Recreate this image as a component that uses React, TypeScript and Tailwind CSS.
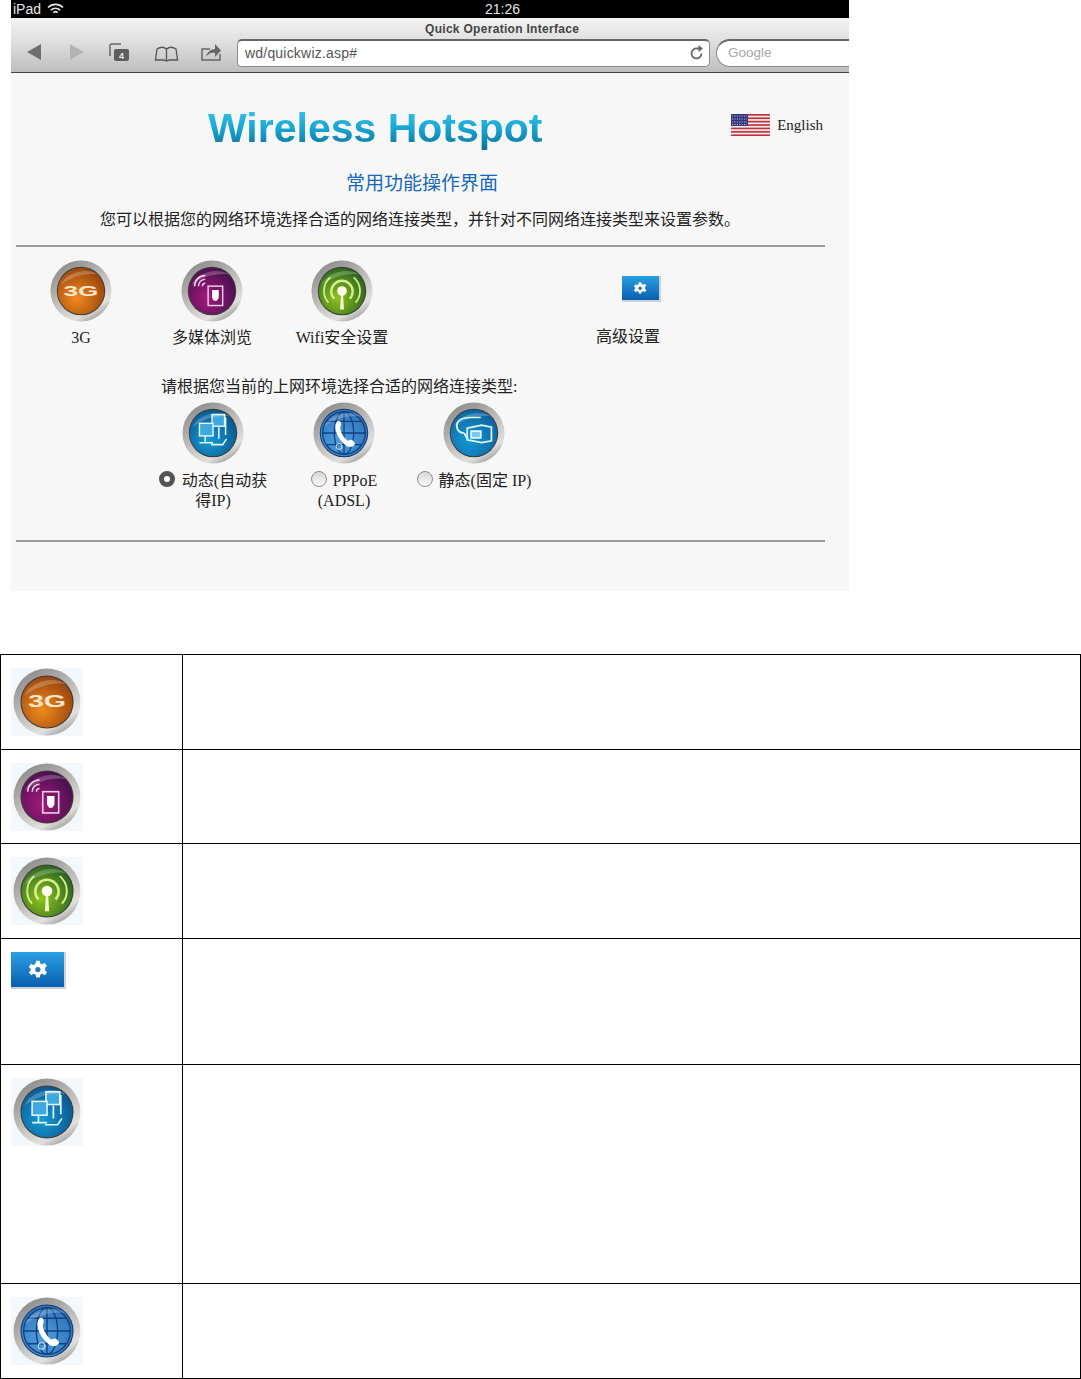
import React from "react";

const SERIF = "font-['Liberation_Serif','Noto_Sans_CJK_SC',serif]";

function Orb({ id, size = 62, inner, rim, children }: { id: string; size?: number; inner: [string, string]; rim?: string; children?: React.ReactNode }) {
  return (
    <svg width={size} height={size} viewBox="0 0 64 64" className="shrink-0">
      <defs>
        <linearGradient id={`ring-${id}`} x1="0.2" y1="0" x2="0.8" y2="1">
          <stop offset="0" stopColor="#8a8a8a" />
          <stop offset="0.45" stopColor="#bdbab6" />
          <stop offset="0.8" stopColor="#e2e0dd" />
          <stop offset="1" stopColor="#8d8d8d" />
        </linearGradient>
        <radialGradient id={`in-${id}`} cx="0.4" cy="0.65" r="0.75">
          <stop offset="0" stopColor={inner[0]} />
          <stop offset="1" stopColor={inner[1]} />
        </radialGradient>
      </defs>
      <circle cx="32" cy="32" r="31.5" fill={`url(#ring-${id})`} />
      <circle cx="32" cy="32" r="25" fill={rim ?? "#3c3c3c"} />
      <circle cx="32" cy="32" r="24" fill={`url(#in-${id})`} />
      {children}
      <path d="M11 26 C16 13 38 7 50 15 C38 13 22 17 11 26Z" fill="#fff" opacity="0.22" />
    </svg>
  );
}

const Orb3G = ({ size }: { size?: number }) => (
  <Orb id={`g3${size}`} size={size} inner={["#f08a1d", "#8f3c0c"]}>
    <text x="32" y="37" textAnchor="middle" fontFamily="Liberation Sans" fontWeight="700" fontSize="15" fill="#f9e6c9" textLength="36" lengthAdjust="spacingAndGlyphs">3G</text>
  </Orb>
);

const OrbMedia = ({ size }: { size?: number }) => (
  <Orb id={`md${size}`} size={size} inner={["#a3197c", "#3f0f4a"]}>
    <g fill="none" stroke="#f0cfe6" strokeWidth="1.5">
      <rect x="28" y="27" width="15" height="20" />
      <path d="M14 27 A11 11 0 0 1 25 16" />
      <path d="M18 27 A7 7 0 0 1 25 20" />
      <path d="M22 27 A3 3 0 0 1 25 24" />
    </g>
    <path d="M32 31h7v8l-2 3h-3l-2-3z" fill="#fff" />
  </Orb>
);

const OrbWifi = ({ size }: { size?: number }) => (
  <Orb id={`wf${size}`} size={size} inner={["#8fc21f", "#1d5a1f"]}>
    <g fill="none" stroke="#d8ec8e" strokeWidth="2.4">
      <path d="M24 40 A11 11 0 1 1 40 40" />
      <path d="M18 44 A18 18 0 0 1 20 18" strokeWidth="1.8" />
      <path d="M46 44 A18 18 0 0 0 44 18" strokeWidth="1.8" />
    </g>
    <path d="M31 34h2l1 17h-4z" fill="#f2f8c6" />
    <circle cx="32" cy="32" r="5" fill="#fdfde8" />
  </Orb>
);

const OrbLan = ({ size }: { size?: number }) => (
  <Orb id={`ln${size}`} size={size} inner={["#149ad4", "#0a4f86"]}>
    <g stroke="#e3f5fd" strokeWidth="1.5" fill="#3fa9df">
      <rect x="31" y="13" width="13" height="12" />
      <rect x="18" y="22" width="14" height="13" />
    </g>
    <path d="M45 16v18M24 35v7h-6M24 42h8M38 26v12M30 44h12l4-6" fill="none" stroke="#e3f5fd" strokeWidth="1.6" />
  </Orb>
);

const OrbGlobe = ({ size }: { size?: number }) => (
  <Orb id={`gb${size}`} size={size} inner={["#4f9fdc", "#2a70b5"]} rim="#123a73">
    <g fill="none" stroke="#123f80" strokeWidth="1.3">
      <circle cx="32" cy="32" r="22" />
      <ellipse cx="32" cy="32" rx="10" ry="22" />
      <path d="M32 10v44M10 32h44M14 20h36M14 44h36" />
    </g>
    <path d="M25 20c2-1 4 0 4 3l-1 4c1 6 4 10 8 13l3-1c2 0 5 3 4 5-2 3-7 3-10 0-6-5-10-12-10-19 0-2 1-4 2-5z" fill="#fff" />
    <circle cx="27" cy="46" r="3" fill="none" stroke="#dbeaf7" strokeWidth="1" />
  </Orb>
);

const OrbCable = ({ size }: { size?: number }) => (
  <Orb id={`cb${size}`} size={size} inner={["#149ad4", "#0a5d99"]}>
    <g fill="none" stroke="#dff3fc" strokeWidth="1.8">
      <path d="M22 32c-7 0-9-6-7-11 2-4 7-5 15-5h9" />
      <path d="M22 32c1 3 2 5 4 6" />
      <path d="M25 27l15-3 10 2v14l-10 2-15-3z" />
      <path d="M29 30h10v7H29z" fill="#7cc7ea" />
    </g>
  </Orb>
);

const GearButton = ({ className }: { className: string }) => (
  <div className={`flex items-center justify-center bg-gradient-to-b from-[#2ba0e4] to-[#0b5fb0] border-r-2 border-b-2 border-[#c9d3d8] ${className}`}>
    <svg viewBox="0 0 24 24" className="h-[60%] w-[60%]" fill="#fff">
      <path d="M10 2h4l.6 3 2.6 1.1 2.6-1.6 2.6 3.5-2.2 2 .1 1 .1 1-.1 1 2.2 2-2.6 3.5-2.6-1.6-2.6 1.1-.6 3h-4l-.6-3-2.6-1.1-2.6 1.6L1.6 15l2.2-2-.1-1 .1-1-2.2-2 2.6-3.5 2.6 1.6L9.400 5z" />
      <circle cx="12" cy="12" r="3" fill="#2b76b8" />
    </svg>
  </div>
);

function Radio({ checked }: { checked?: boolean }) {
  return checked ? (
    <span className="mr-[7px] inline-block h-4 w-4 rounded-full border-[5px] border-[#555] bg-white align-[-1px]" />
  ) : (
    <span className="mr-[6px] inline-block h-4 w-4 rounded-full border border-[#8d8d8d] bg-gradient-to-b from-[#d6d6d6] to-[#fbfbfb] align-[-1px]" />
  );
}

function Flag() {
  return (
    <svg width="39" height="22" viewBox="0 0 39 22" className="shrink-0">
      <rect width="39" height="22" fill="#f3eeee" />
      {[0, 3.4, 6.8, 10.200, 13.600, 17, 20.400].map((y) => (
        <rect key={y} y={y} width="39" height="1.700" fill="#c2333d" />
      ))}
      <rect width="17" height="12" fill="#33367a" />
      <path d="M1 2h15M1 5h15M1 8h15M1 10.500h15" stroke="#c6c8e6" strokeWidth="0.9" strokeDasharray="1.200 1.200" />
    </svg>
  );
}

function Toolbar() {
  return (
    <div className="flex h-[55px] flex-col border-b border-[#444] bg-gradient-to-b from-[#f3f3f3] via-[#dcdcdc] to-[#bdbdbd]">
      <div className="flex h-[21px] items-center pl-[414px] font-['Liberation_Sans',sans-serif] text-[12px] font-bold tracking-[0.3px] text-[#444]">
        Quick Operation Interface
      </div>
      <div className="flex items-start">
        <svg width="226" height="28" viewBox="0 0 226 28" className="shrink-0" fill="none">
          <path d="M16 13l14-8v16z" fill="#6e6e6e" />
          <path d="M59 5l14 8-14 8z" fill="#b4b4b4" />
          <path d="M99 17V7c0-1 1-2 2-2h9" stroke="#666" strokeWidth="1.500" />
          <rect x="103" y="10" width="15" height="12" rx="2" fill="#5e5e5e" />
          <text x="110.500" y="20" textAnchor="middle" fontSize="9" fontWeight="700" fontFamily="Liberation Sans" fill="#eee">4</text>
          <path d="M146 10c3-2 7-2 9.500 0 2.500-2 6.500-2 9.500 0l1.500 11h-8.500c-1 1-4 1-5 0h-8.500zM155.500 10v11" stroke="#555" strokeWidth="1.300" />
          <path d="M199 10h-8v11h18v-6" stroke="#666" strokeWidth="1.500" />
          <path d="M195 18c1-5 5-8 9-8V5l6 6.500-6 6.500v-4c-4-1-7 1-9 4z" fill="#666" />
        </svg>
        <div className="flex h-[28px] w-[473px] items-center justify-between rounded-[5px] border border-[#8a8a8a] border-t-2 border-t-[#666] bg-white pb-[2px] pl-[7px] pr-[5px] font-['Liberation_Sans',sans-serif] text-[14px] tracking-[0.2px] text-[#555]">
          <span>wd/quickwiz.asp#</span>
          <svg width="14" height="15" viewBox="0 0 14 15" fill="none">
            <path d="M11.500 8.500A5 5 0 1 1 7 3.500h3" stroke="#6a6a6a" strokeWidth="1.800" />
            <path d="M8.500 0l4.500 3.500L8.500 7z" fill="#6a6a6a" />
          </svg>
        </div>
        <div className="ml-[6px] flex h-[28px] flex-1 items-center rounded-l-[14px] border border-r-0 border-[#8a8a8a] border-t-2 border-t-[#666] bg-white pb-[2px] pl-[11px] font-['Liberation_Sans',sans-serif] text-[13.500px] text-[#a8a8a8]">
          Google
        </div>
      </div>
    </div>
  );
}

function Browser() {
  return (
    <div className={`ml-[11px] w-[838px] bg-[#f7f7f7] text-[16px] leading-[20px] text-[#222] ${SERIF}`}>
      <div className="relative flex h-[18px] items-center bg-black pl-[2px] font-['Liberation_Sans',sans-serif] text-[14px] text-[#e6e6e6]">
        <span>iPad</span>
        <svg width="17" height="12" viewBox="0 0 17 12" className="ml-[6px]" fill="none" stroke="#e6e6e6" strokeWidth="1.600">
          <path d="M1 4.500a10.500 10.500 0 0 1 15 0M3.800 7.300a6.500 6.500 0 0 1 9.400 0M6.400 9.700a3 3 0 0 1 4.200 0" />
        </svg>
        <span className="ml-[421px]">21:26</span>
      </div>
      <Toolbar />

      <div className="flex h-[87px] items-start justify-between pt-[32px]">
        <h1 className="ml-[197px] whitespace-nowrap bg-gradient-to-b from-[#3ccbee] via-[#18a6d4] to-[#0c6f94] bg-clip-text font-['Liberation_Sans',sans-serif] text-[41px] font-bold leading-[46px] text-transparent">
          Wireless Hotspot
        </h1>
        <div className="mr-[26px] mt-[9px] flex items-center gap-[7px] text-[15px]">
          <Flag />
          <span>English</span>
        </div>
      </div>

      <p className="mt-[12px] pl-[335px] text-[19px] leading-[24px] text-[#1667bd]">常用功能操作界面</p>
      <p className="mt-[14px] pl-[89px]">您可以根据您的网络环境选择合适的网络连接类型，并针对不同网络连接类型来设置参数。</p>

      <div className="mx-[5px] mt-[15px] h-[2px] w-[809px] bg-[#9b9b9b]" />

      <div className="mt-[13px] flex items-start pl-[30px]">
        <div className="flex w-[80px] flex-col items-center gap-[4px]"><Orb3G /><span className="mt-[2px]">3G</span></div>
        <div className="ml-[51px] flex w-[80px] flex-col items-center gap-[4px]"><OrbMedia /><span className="mt-[2px]">多媒体浏览</span></div>
        <div className="ml-[44px] flex w-[92px] flex-col items-center gap-[4px]"><OrbWifi /><span className="mt-[2px] whitespace-nowrap">Wifi安全设置</span></div>
        <div className="ml-[208px] flex w-[64px] flex-col items-start">
          <GearButton className="ml-[26px] mt-[16px] h-[26px] w-[39px]" />
          <span className="mt-[25px] whitespace-nowrap">高级设置</span>
        </div>
      </div>

      <p className="mt-[29px] pl-[150px]">请根据您当前的上网环境选择合适的网络连接类型:</p>

      <div className="mt-[5px] flex items-start pl-[147px]">
        <div className="flex w-[110px] flex-col items-center text-center">
          <OrbLan />
          <span className="mt-[7px]"><Radio checked />动态(自动获<br />得IP)</span>
        </div>
        <div className="ml-[41px] flex w-[70px] flex-col items-center text-center">
          <OrbGlobe />
          <span className="mt-[7px] whitespace-nowrap"><Radio />PPPoE<br />(ADSL)</span>
        </div>
        <div className="ml-[37px] flex w-[116px] flex-col items-center text-center">
          <OrbCable />
          <span className="mt-[7px] whitespace-nowrap"><Radio />静态(固定 IP)</span>
        </div>
      </div>

      <div className="mx-[5px] mt-[29px] h-[2px] w-[809px] bg-[#9b9b9b]" />
      <div className="h-[49px]" />
    </div>
  );
}

const ROWS: { h: string; icon: React.ReactNode }[] = [
  { h: "h-[95px]", icon: <Orb3G size={68} /> },
  { h: "h-[94px]", icon: <OrbMedia size={68} /> },
  { h: "h-[95px]", icon: <OrbWifi size={68} /> },
  { h: "h-[126px]", icon: null },
  { h: "h-[219px]", icon: <OrbLan size={68} /> },
  { h: "h-[95px]", icon: <OrbGlobe size={68} /> },
];

export default function App() {
  return (
    <div className="h-[1379px] w-[1081px] overflow-hidden bg-white">
      <Browser />
      <table className="mt-[63px] w-[1081px] table-fixed border-collapse border border-black">
        <colgroup>
          <col className="w-[182px]" />
          <col />
        </colgroup>
        <tbody>
          {ROWS.map((r, i) => (
            <tr key={i} className={r.h}>
              <td className="border border-black pl-[10px] pt-[13px] align-top">
                {r.icon ? (
                  <div className="flex h-[68px] w-[72px] items-center justify-center bg-[#f3f8fd]">{r.icon}</div>
                ) : (
                  <GearButton className="h-[37px] w-[55px]" />
                )}
              </td>
              <td className="border border-black" />
            </tr>
          ))}
        </tbody>
      </table>
    </div>
  );
}
